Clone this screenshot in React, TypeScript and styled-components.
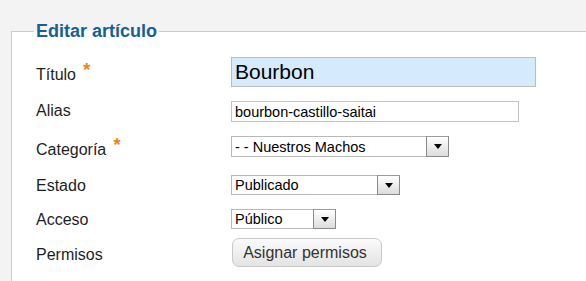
import styled, { createGlobalStyle } from "styled-components";

const GlobalStyle = createGlobalStyle`
  html, body {
    margin: 0;
    padding: 0;
    background: #f3f3f3;
    overflow: hidden;
  }
  body {
    font-family: "Liberation Sans", Arial, sans-serif;
  }
`;

const Page = styled.div`
  padding: 21px 0 0 11px;
  height: 281px;
  box-sizing: border-box;
  overflow: hidden;
`;

const Fieldset = styled.fieldset`
  margin: 0 -40px 0 0;
  padding: 0 0 30px 24px;
  border: 1px solid #cccccc;
  background: #ffffff;
  min-width: 0;
`;

const Legend = styled.legend`
  margin-left: -2px;
  padding: 0 2px;
  font-size: 18px;
  font-weight: bold;
  color: #195f94;
`;

const Form = styled.div`
  display: flex;
  flex-direction: column;
  padding-top: 15px;
`;

const Row = styled.div<{ $h: number; $mb: number }>`
  display: grid;
  grid-template-columns: 195px 1fr;
  grid-template-rows: ${({ $h }) => $h}px;
  align-items: center;
  height: ${({ $h }) => $h}px;
  margin-bottom: ${({ $mb }) => $mb}px;
`;

const Label = styled.label<{ $dy?: number }>`
  font-size: 16px;
  color: #1e1e1e;
  line-height: 18px;
  padding-top: ${({ $dy }) => Math.max(0, ($dy || 0) * 2)}px;
  padding-bottom: ${({ $dy }) => Math.max(0, -($dy || 0) * 2)}px;
`;

const Star = styled.span`
  color: #e8891a;
  font-size: 19px;
  font-weight: bold;
  line-height: 0;
  margin-left: 7px;
  vertical-align: 4px;
`;

const TextInput = styled.div<{ $w: number; $h: number; $big?: boolean }>`
  box-sizing: border-box;
  width: ${({ $w }) => $w}px;
  height: ${({ $h }) => $h}px;
  display: flex;
  align-items: center;
  padding-left: 3px;
  border: 1px solid ${({ $big }) => ($big ? "#b9bcc0" : "#c4c4c4")};
  background: ${({ $big }) => ($big ? "#d5ebfd" : "#ffffff")};
  font-size: ${({ $big }) => ($big ? 21 : 14.5)}px;
  color: #000;
`;

const Select = styled.div<{ $w: number; $h: number }>`
  box-sizing: border-box;
  width: ${({ $w }) => $w}px;
  height: ${({ $h }) => $h}px;
  display: flex;
  align-items: center;
  justify-content: space-between;
  border: 1px solid #b8b8b8;
  background: #ffffff;
  font-size: 14.5px;
  color: #000;
  padding-left: 3px;
`;

const ArrowBox = styled.div`
  box-sizing: border-box;
  width: 23px;
  height: calc(100% + 2px);
  margin-right: -1px;
  border: 1px solid #8a8a8a;
  border-top-color: #9c9c9c;
  background: linear-gradient(#ffffff, #dcdcdc);
  display: flex;
  align-items: center;
  justify-content: center;
`;

const Triangle = styled.div`
  width: 0;
  height: 0;
  border-left: 4px solid transparent;
  border-right: 4px solid transparent;
  border-top: 5px solid #000;
`;

const Button = styled.button`
  box-sizing: border-box;
  width: 150px;
  height: 29px;
  border: 1px solid #c9c9c9;
  border-radius: 7px;
  background: linear-gradient(#fbfbfb, #e3e3e3);
  font-family: "Liberation Sans", Arial, sans-serif;
  font-size: 16px;
  color: #333333;
  padding: 0 4px 0 0;
  margin-left: 1px;
`;

const Dropdown = ({ value, width, height }: { value: string; width: number; height: number }) => (
  <Select $w={width} $h={height}>
    <span>{value}</span>
    <ArrowBox>
      <Triangle />
    </ArrowBox>
  </Select>
);

const App = () => {
  return (
    <>
      <GlobalStyle />
      <Page>
        <Fieldset>
          <Legend>Editar artículo</Legend>
          <Form>
            <Row $h={30} $mb={14}>
              <Label $dy={2.5}>
                Título<Star>*</Star>
              </Label>
              <TextInput $w={305} $h={30} $big>
                Bourbon
              </TextInput>
            </Row>
            <Row $h={21} $mb={14}>
              <Label $dy={-0.5}>Alias</Label>
              <TextInput $w={288} $h={21}>
                bourbon-castillo-saitai
              </TextInput>
            </Row>
            <Row $h={21} $mb={18}>
              <Label $dy={3}>
                Categoría<Star>*</Star>
              </Label>
              <Dropdown value="- - Nuestros Machos" width={218} height={21} />
            </Row>
            <Row $h={20} $mb={14}>
              <Label $dy={0.5}>Estado</Label>
              <Dropdown value="Publicado" width={169} height={20} />
            </Row>
            <Row $h={20} $mb={9}>
              <Label $dy={1}>Acceso</Label>
              <Dropdown value="Público" width={105} height={20} />
            </Row>
            <Row $h={29} $mb={0}>
              <Label $dy={2.5}>Permisos</Label>
              <Button>Asignar permisos</Button>
            </Row>
          </Form>
        </Fieldset>
      </Page>
    </>
  );
};

export default App;
